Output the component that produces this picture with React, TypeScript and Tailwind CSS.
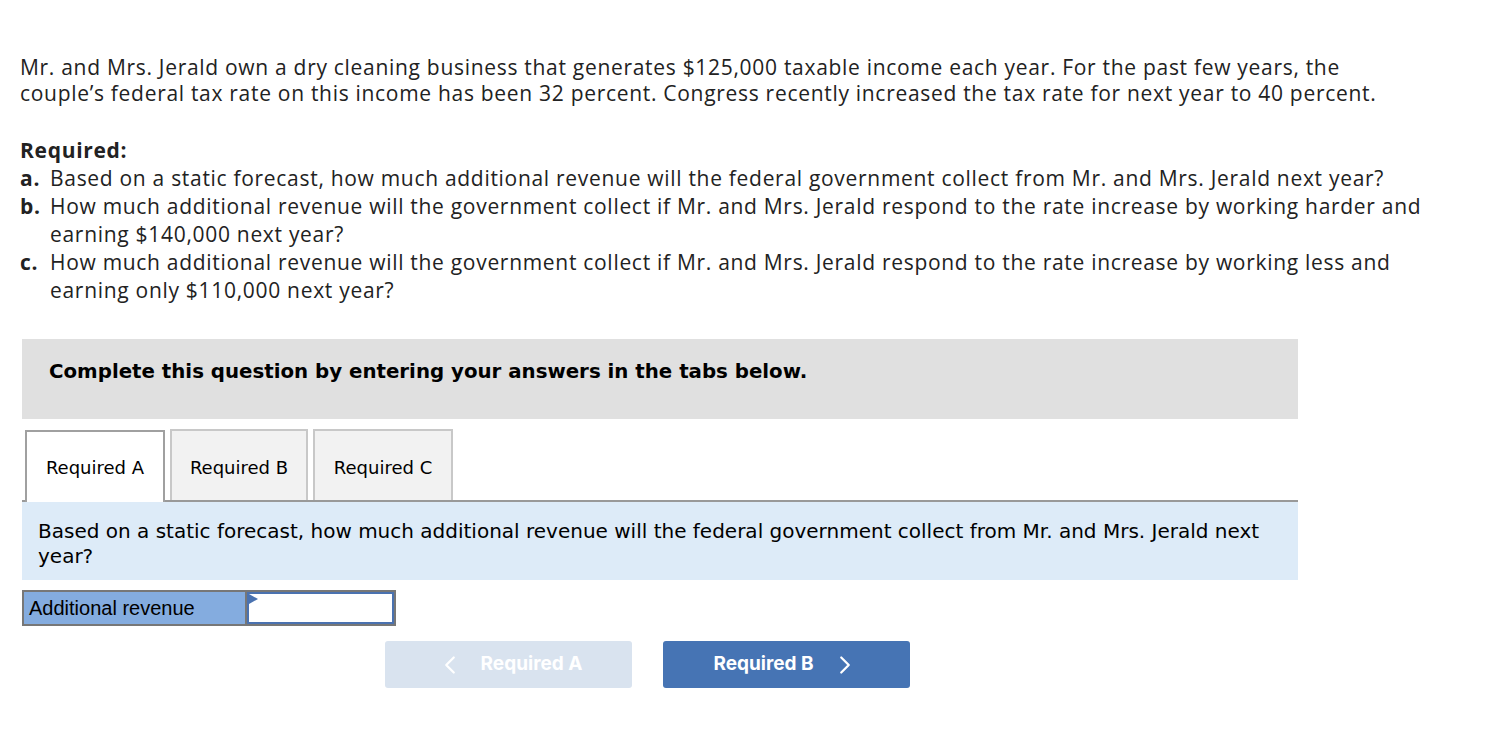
import { ChevronLeft, ChevronRight } from "lucide-react"

const prose = { fontFamily: "'Open Sans', Lato, sans-serif" }
const verdana = { fontFamily: "'DejaVu Sans', Verdana, sans-serif" }

export default function App() {
  const items = [
    {
      key: "a.",
      lines: [
        "Based on a static forecast, how much additional revenue will the federal government collect from Mr. and Mrs. Jerald next year?",
      ],
    },
    {
      key: "b.",
      lines: [
        "How much additional revenue will the government collect if Mr. and Mrs. Jerald respond to the rate increase by working harder and",
        "earning $140,000 next year?",
      ],
    },
    {
      key: "c.",
      lines: [
        "How much additional revenue will the government collect if Mr. and Mrs. Jerald respond to the rate increase by working less and",
        "earning only $110,000 next year?",
      ],
    },
  ]

  return (
    <div className="min-h-screen bg-white text-[#222]">
      <div className="pl-5 pt-[54px] text-[21px] leading-[26px] tracking-[0.7px] whitespace-nowrap" style={prose}>
        <p>
          Mr. and Mrs. Jerald own a dry cleaning business that generates $125,000 taxable income each year. For the past few years, the
          <br />
          couple’s federal tax rate on this income has been 32 percent. Congress recently increased the tax rate for next year to 40 percent.
        </p>

        <div className="mt-[30px] leading-[28px]">
          <p className="font-bold">Required:</p>
          {items.map((item) => (
            <div key={item.key} className="flex">
              <span className="w-[30px] font-bold">{item.key}</span>
              <div>
                {item.lines.map((l) => (
                  <div key={l}>{l}</div>
                ))}
              </div>
            </div>
          ))}
        </div>
      </div>

      <div className="ml-[22px] w-[1276px]" style={verdana}>
        <div className="mt-[35px] h-[80px] bg-[#e0e0e0] pl-[27px] pt-[18px] text-[19.8px] font-bold text-black">
          Complete this question by entering your answers in the tabs below.
        </div>

        <div className="mt-[10px] flex items-end gap-[5px] pl-[3px] border-b-2 border-[#999]">
          <div className="h-[72px] w-[140px] -mb-[2px] bg-white border-2 border-b-0 border-[#a0a0a0] flex items-center justify-center pt-[1px] text-[18px] text-black">
            Required A
          </div>
          <div className="h-[71px] w-[138px] bg-[#f2f2f2] border-2 border-b-0 border-[#c8c8c8] flex items-center justify-center pt-[4px] text-[18px] text-black">
            Required B
          </div>
          <div className="h-[71px] w-[140px] bg-[#f2f2f2] border-2 border-b-0 border-[#c8c8c8] flex items-center justify-center pt-[4px] text-[18px] text-black">
            Required C
          </div>
        </div>

        <div className="bg-[#ddebf8] h-[78px] pl-[16px] pt-[17px] text-[20px] leading-[25px] text-black">
          Based on a static forecast, how much additional revenue will the federal government collect from Mr. and Mrs. Jerald next
          <br />
          year?
        </div>

        <div className="mt-[10px] flex">
          <div
            className="h-[36px] w-[225px] bg-[#84acdf] border-2 border-[#777] flex items-center pl-[5px] text-[20px] text-black"
            style={{ fontFamily: "'Liberation Sans', Arial, sans-serif" }}
          >
            Additional revenue
          </div>
          <div className="relative h-[36px] w-[149px] border-2 border-[#777] border-l-0 bg-white">
            <div className="h-full w-full border-2 border-[#4a72b0]" />
            <svg className="absolute left-[2px] top-[2px]" width="9" height="10" viewBox="0 0 9 10">
              <polygon points="0,0 9,5 0,10" fill="#4a72b0" />
            </svg>
          </div>
        </div>

        <div className="mt-[15px] flex gap-[31px] pl-[363px]" style={{ fontFamily: "Inter, sans-serif" }}>
          <div className="h-[47px] w-[247px] rounded-[3px] bg-[#d9e3ef] flex items-center justify-center gap-[16px] text-white text-[19px] font-bold">
            <ChevronLeft size={30} strokeWidth={1.8} />
            <span>Required A</span>
          </div>
          <div className="h-[47px] w-[247px] rounded-[3px] bg-[#4674b4] flex items-center justify-center gap-[16px] text-white text-[19px] font-bold">
            <span>Required B</span>
            <ChevronRight size={30} strokeWidth={1.8} />
          </div>
        </div>
      </div>
    </div>
  )
}
